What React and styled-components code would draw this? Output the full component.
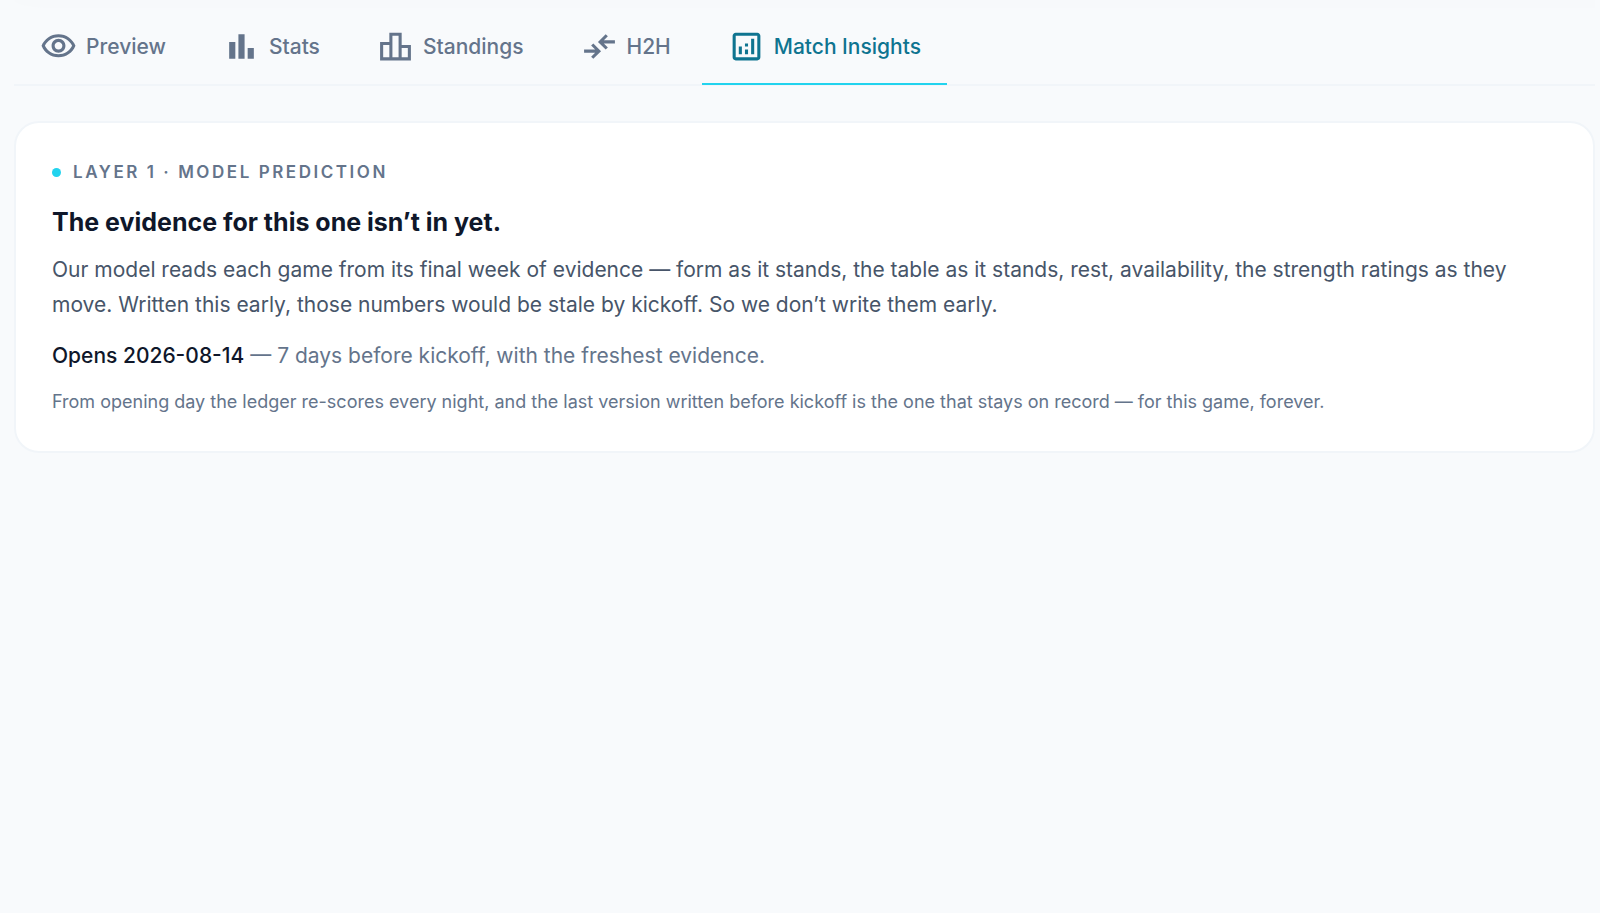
import React, { useState } from "react";
import styled, { createGlobalStyle } from "styled-components";

const GlobalStyle = createGlobalStyle`
  * {
    box-sizing: border-box;
  }

  body {
    margin: 0;
    background: #f8fafc;
    font-family: Inter, "Liberation Sans", sans-serif;
    font-size: 21px;
    color: #475569;
    -webkit-font-smoothing: antialiased;
  }
`;

const Page = styled.main`
  padding: 0 5px 0 14px;
`;

// Lower edge of the shade left by the header above the tabs
const HeaderShade = styled.div`
  height: 8px;
  border-bottom-left-radius: 40px 8px;
  background: #f7f9fb;
`;

// Tabs
const TabList = styled.div`
  display: flex;
  gap: 5px;
  border-bottom: 2px solid #f1f5f9;
`;

const Tab = styled.button`
  display: flex;
  align-items: center;
  gap: 9px;
  height: 77px;
  margin-bottom: -1px;
  padding: 2px 26px 0;
  border: 0;
  border-bottom: 2px solid ${(props) => (props.$active ? "#22d3ee" : "transparent")};
  background: none;
  color: ${(props) => (props.$active ? "#0e7490" : "#64748b")};
  font-family: inherit;
  font-size: 21px;
  font-weight: 500;
  line-height: 32px;
  white-space: nowrap;
  cursor: pointer;

  &:hover {
    color: #0e7490;
  }
`;

const TabIcon = styled.svg`
  flex: none;
  width: 37px;
  height: 37px;
  fill: currentColor;
`;

// Card
const Card = styled.section`
  margin-top: 35px;
  padding: 36px 36px 35px;
  border: 2px solid #f1f5f9;
  border-radius: 25px;
  background: #fff;
`;

const Eyebrow = styled.p`
  display: flex;
  align-items: center;
  gap: 12px;
  margin: 0;
  color: #64748b;
  font-size: 17px;
  font-weight: 600;
  line-height: 26px;
  letter-spacing: 0.15em;
  text-transform: uppercase;
`;

const Dot = styled.span`
  width: 9px;
  height: 9px;
  border-radius: 50%;
  background: #22d3ee;
`;

const Title = styled.h2`
  margin: 18px 0 0;
  color: #0f172a;
  font-size: 25px;
  font-weight: 700;
  line-height: 38px;
`;

const Text = styled.p`
  margin: 11px 0 0;
  line-height: 35px;
`;

const Opens = styled.p`
  margin: 18px 0 0;
  color: #64748b;
  line-height: 32px;

  strong {
    color: #0f172a;
    font-weight: 500;
  }
`;

const Note = styled.p`
  margin: 16px 0 0;
  color: #64748b;
  font-size: 18px;
  line-height: 28px;
`;

const tabs = [
  {
    id: "preview",
    label: "Preview",
    viewBox: "0 0 24 24",
    path: "M12 6c3.79 0 7.17 2.13 8.82 5.5C19.17 14.87 15.79 17 12 17s-7.17-2.13-8.82-5.5C4.83 8.13 8.21 6 12 6m0-2C7 4 2.73 7.11 1 11.5 2.73 15.89 7 19 12 19s9.27-3.11 11-7.5C21.27 7.11 17 4 12 4zm0 5c1.38 0 2.5 1.12 2.5 2.5S13.38 14 12 14s-2.5-1.12-2.5-2.5S10.62 9 12 9m0-2c-2.48 0-4.5 2.02-4.5 4.5S9.52 16 12 16s4.5-2.02 4.5-4.5S14.48 7 12 7z",
  },
  {
    id: "stats",
    label: "Stats",
    viewBox: "0 0 24 24",
    path: "M4 9h4v11H4zM16 13h4v7h-4zM10 4h4v16h-4z",
  },
  {
    id: "standings",
    label: "Standings",
    viewBox: "0 0 24 24",
    path: "M16 11V3H8v6H2v12h20V11h-6zm-6-6h4v14h-4V5zm-6 6h4v8H4v-8zm16 8h-4v-6h4v6z",
  },
  {
    id: "h2h",
    label: "H2H",
    viewBox: "0 -960 960 960",
    path: "m320-160-57-56 104-104H80v-80h287L263-504l57-56 200 200-200 200Zm320-240L440-600l200-200 57 56-104 104h287v80H593l104 104-57 56Z",
  },
  {
    id: "insights",
    label: "Match Insights",
    viewBox: "0 0 24 24",
    path: "M19 3H5c-1.1 0-2 .9-2 2v14c0 1.1.9 2 2 2h14c1.1 0 2-.9 2-2V5c0-1.1-.9-2-2-2zm0 16H5V5h14v14zM7 12h2v5H7zM15 7h2v10h-2zM11 14h2v3h-2zM11 10h2v2h-2z",
  },
];

const App = () => {
  const [active, setActive] = useState("insights");

  return (
    <>
      <GlobalStyle />
      <Page>
        <HeaderShade />
        <TabList role="tablist">
          {tabs.map((tab) => (
            <Tab
              key={tab.id}
              type="button"
              role="tab"
              aria-selected={active === tab.id}
              $active={active === tab.id}
              onClick={() => setActive(tab.id)}
            >
              <TabIcon viewBox={tab.viewBox} aria-hidden="true">
                <path d={tab.path} />
              </TabIcon>
              {tab.label}
            </Tab>
          ))}
        </TabList>
        <Card>
          <Eyebrow>
            <Dot />
            Layer 1 · Model prediction
          </Eyebrow>
          <Title>The evidence for this one isn’t in yet.</Title>
          <Text>
            Our model reads each game from its final week of evidence — form as it stands, the
            table as it stands, rest, availability, the strength ratings as they move. Written this
            early, those numbers would be stale by kickoff. So we don’t write them early.
          </Text>
          <Opens>
            <strong>Opens 2026-08-14</strong> — 7 days before kickoff, with the freshest evidence.
          </Opens>
          <Note>
            From opening day the ledger re-scores every night, and the last version written before
            kickoff is the one that stays on record — for this game, forever.
          </Note>
        </Card>
      </Page>
    </>
  );
};

export default App;
